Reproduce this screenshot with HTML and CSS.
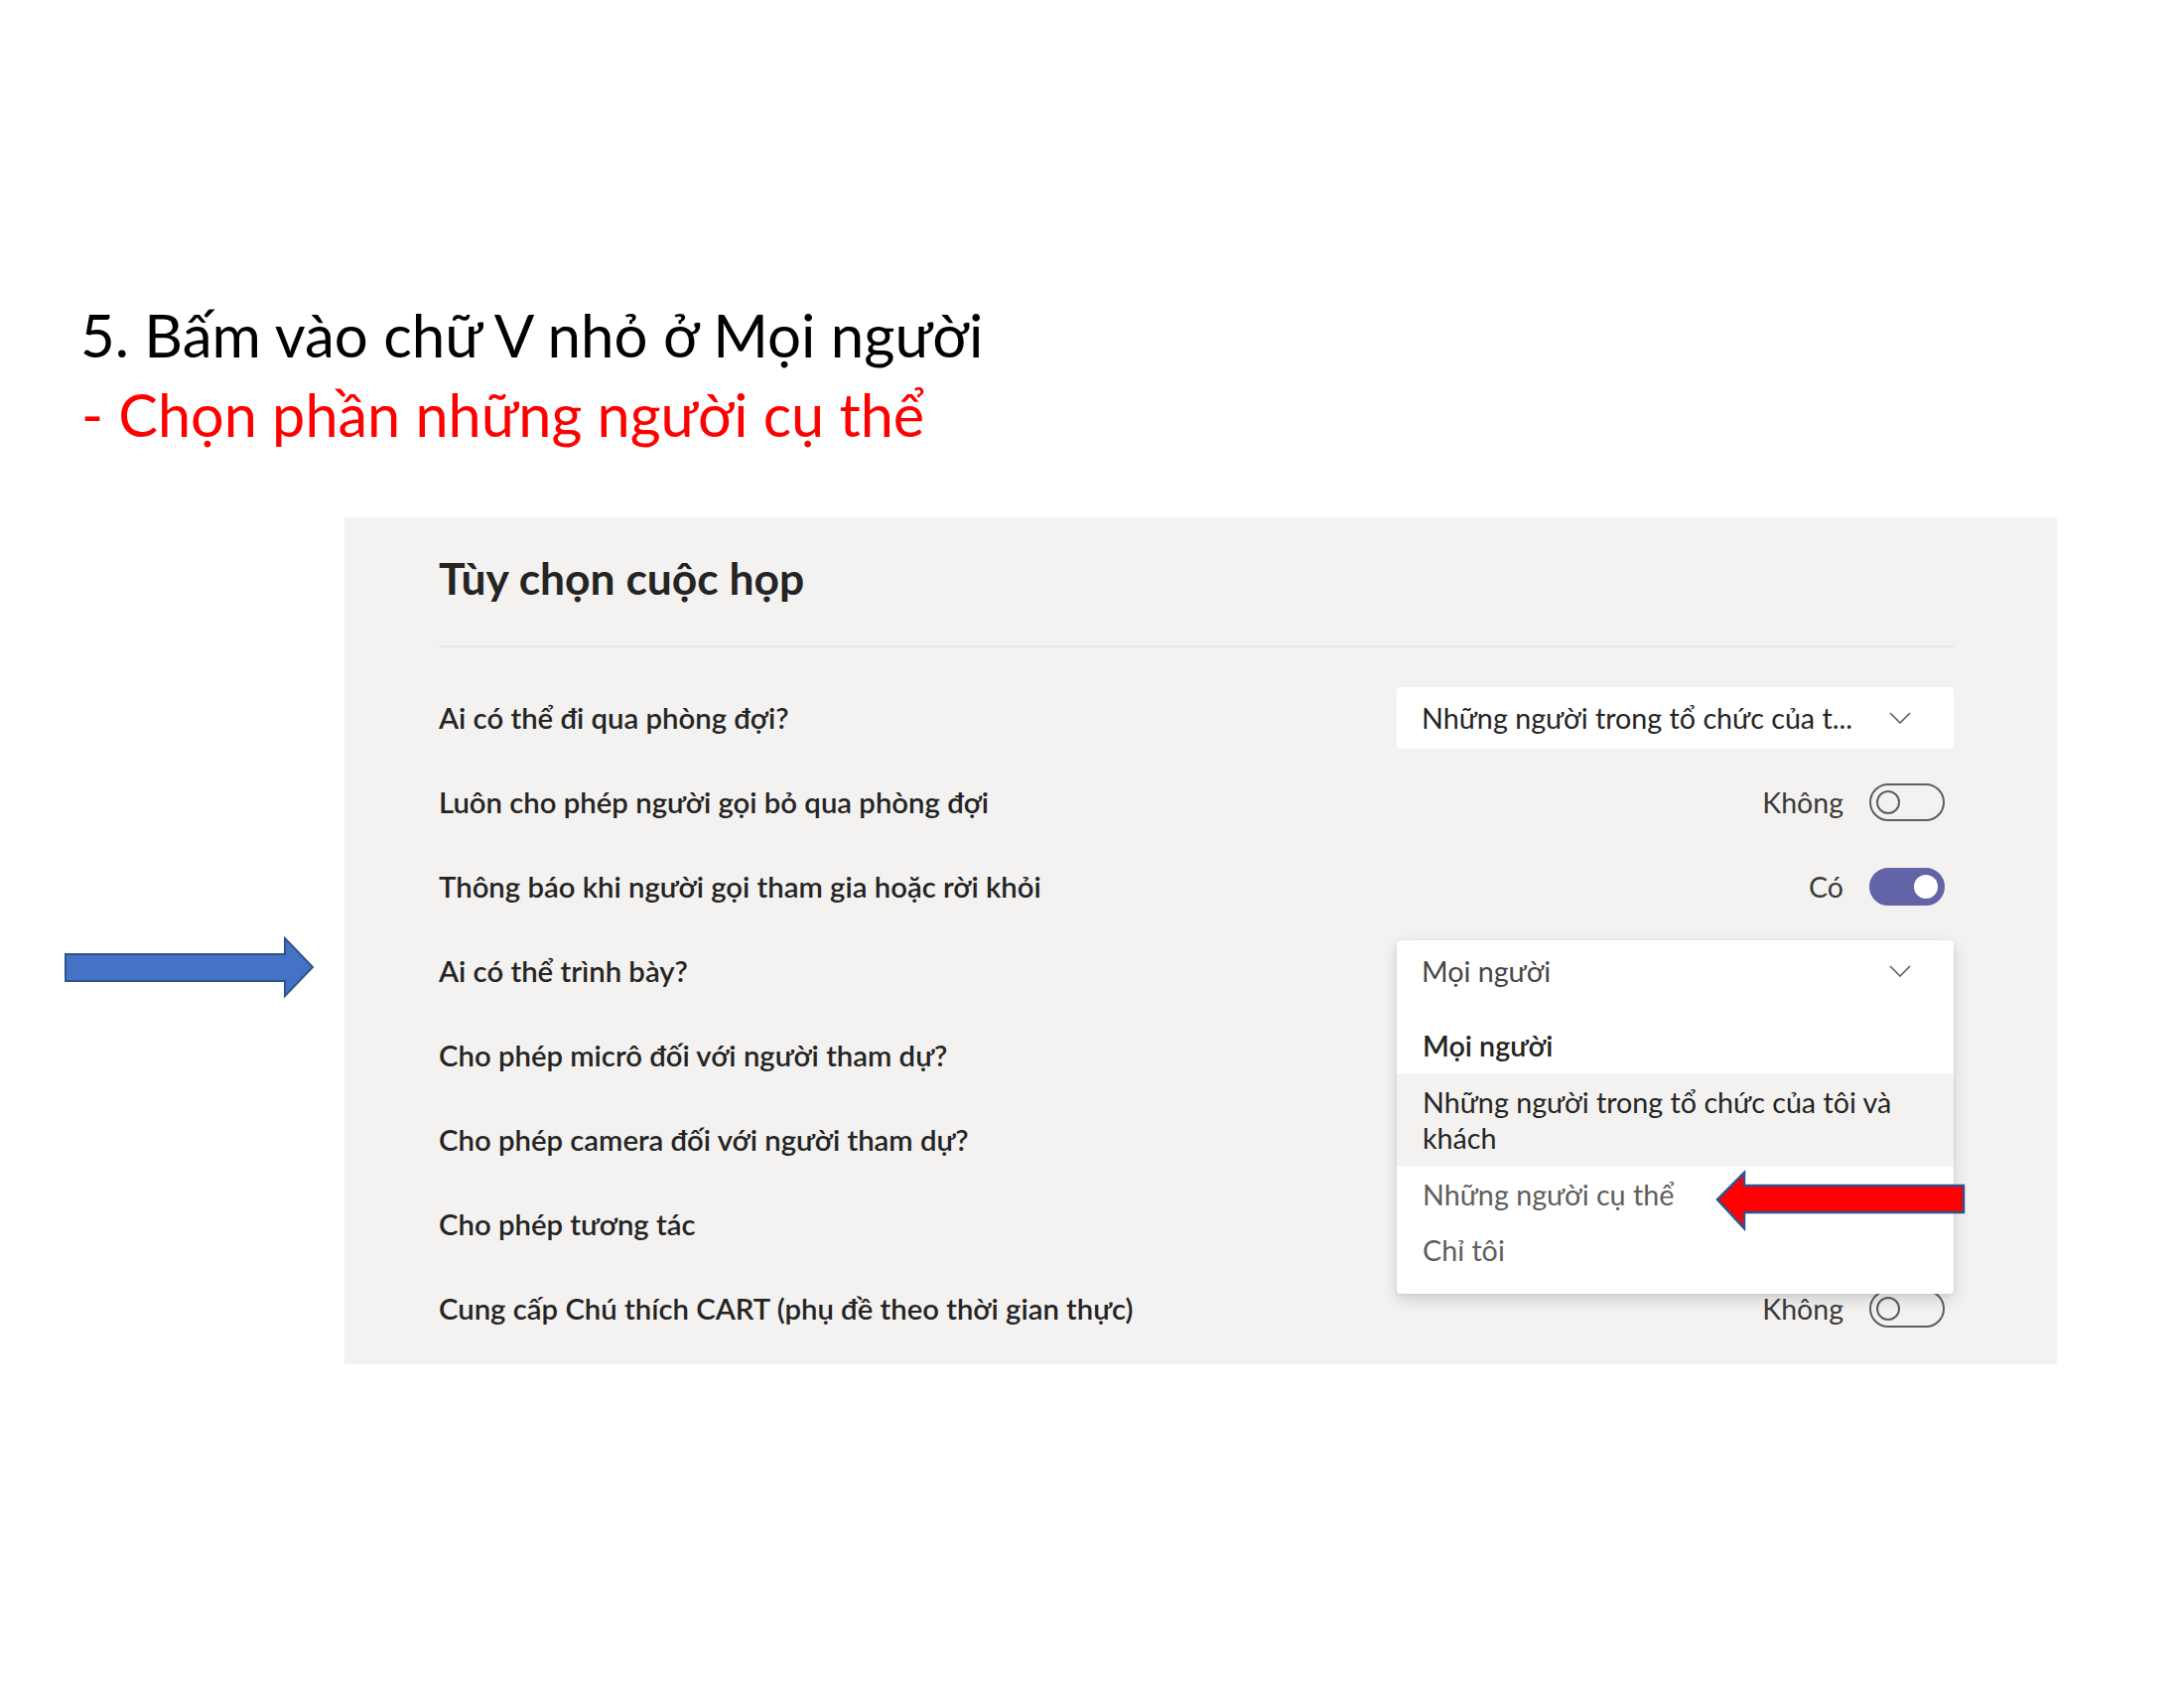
FILE: index.html
```html
<!DOCTYPE html>
<html lang="vi">
  <head>
    <meta charset="UTF-8" />
    <meta name="viewport" content="width=device-width, initial-scale=1.0" />
    <title>Tùy chọn cuộc họp</title>
    <link rel="stylesheet" href="styles.css">
  </head>
  <body>
    <div class="slide">
      <div class="caption">
        <p class="step">5. Bấm vào chữ V nhỏ ở Mọi người</p>
        <p class="step hint">- Chọn phần những người cụ thể</p>
      </div>

      <section class="options">
        <h1>Tùy chọn cuộc họp</h1>
        <div class="list">
          <div class="row">
            <span class="label">Ai có thể đi qua phòng đợi?</span>
            <div class="select">
              <span>Những người trong tổ chức của t...</span>
              <svg class="chevron" viewBox="0 0 22 12"><path d="M1 1 L11 11 L21 1" /></svg>
            </div>
          </div>
          <div class="row">
            <span class="label">Luôn cho phép người gọi bỏ qua phòng đợi</span>
            <div class="switch">
              <span>Không</span>
              <span class="toggle"></span>
            </div>
          </div>
          <div class="row">
            <span class="label">Thông báo khi người gọi tham gia hoặc rời khỏi</span>
            <div class="switch">
              <span>Có</span>
              <span class="toggle on"></span>
            </div>
          </div>
          <div class="row">
            <span class="label">Ai có thể trình bày?</span>
            <div class="select open">
              <div class="menu">
                <div class="menu-value">
                  <span>Mọi người</span>
                  <svg class="chevron" viewBox="0 0 22 12"><path d="M1 1 L11 11 L21 1" /></svg>
                </div>
                <ul class="menu-list">
                  <li class="current">Mọi người</li>
                  <li class="hovered">Những người trong tổ chức của tôi và khách</li>
                  <li class="muted">Những người cụ thể</li>
                  <li class="muted">Chỉ tôi</li>
                </ul>
              </div>
            </div>
          </div>
          <div class="row">
            <span class="label">Cho phép micrô đối với người tham dự?</span>
          </div>
          <div class="row">
            <span class="label">Cho phép camera đối với người tham dự?</span>
          </div>
          <div class="row">
            <span class="label">Cho phép tương tác</span>
          </div>
          <div class="row">
            <span class="label">Cung cấp Chú thích CART (phụ đề theo thời gian thực)</span>
            <div class="switch">
              <span>Không</span>
              <span class="toggle"></span>
            </div>
          </div>
        </div>
      </section>

      <!-- annotation arrows drawn on top of the slide -->
      <svg class="marks" viewBox="0 0 2200 1700">
        <polygon class="arrow-blue" points="66,961 287,961 287,945 315,974 287,1003 287,988 66,988" />
        <polygon class="arrow-red" points="1978,1194 1757,1194 1757,1181 1730,1208 1757,1237 1757,1221 1978,1221" />
      </svg>
    </div>
  </body>
</html>
```

FILE: styles.css
```css
body {
  margin: 0;
  background-color: #ffffff;
  font-family: Lato, "Open Sans", sans-serif;
}
.slide {
  position: relative;
  width: 2200px;
  height: 1700px;
}
.caption {
  padding: 297px 0 0 81px;
}
.step {
  margin: 0;
  font-size: 60px;
  line-height: 80px;
  color: #000000;
}
.hint {
  color: #ff0000;
  margin-left: 1px;
  font-size: 59.4px;
}
.options {
  margin: 64px 0 0 347px;
  width: 1725px;
  height: 853px;
  box-sizing: border-box;
  padding: 31px 104px 0 95px;
  background-color: #f3f2f1;
}
h1 {
  margin: 0;
  padding-bottom: 38px;
  border-bottom: 2px solid #e9e7e5;
  font-size: 44.4px;
  line-height: 60px;
  font-weight: 700;
  color: #252423;
}
.list {
  margin-top: 28px;
}
.row {
  display: flex;
  align-items: center;
  justify-content: space-between;
  height: 85px;
}
.label {
  font-size: 29.3px;
  font-weight: 600;
  color: #252423;
}
.select {
  position: relative;
  width: 561px;
  height: 62px;
  box-sizing: border-box;
  padding: 0 43px 0 25px;
  display: flex;
  align-items: center;
  justify-content: space-between;
  background-color: #ffffff;
  border-radius: 4px;
  font-size: 28.7px;
  color: #252423;
}
.chevron {
  width: 22px;
  height: 12px;
}
.chevron path {
  fill: none;
  stroke: #605e5c;
  stroke-width: 1.6;
}
.select.open {
  padding: 0;
  background-color: transparent;
}
.menu {
  position: absolute;
  top: 0;
  left: 0;
  width: 100%;
  z-index: 2;
  background-color: #ffffff;
  border-radius: 4px;
  box-shadow: 0 6px 16px rgba(0, 0, 0, 0.14), 0 1px 4px rgba(0, 0, 0, 0.08);
}
.menu-value {
  height: 62px;
  box-sizing: border-box;
  padding: 0 43px 0 25px;
  display: flex;
  align-items: center;
  justify-content: space-between;
  color: #484644;
}
.menu-list {
  list-style: none;
  margin: 0;
  padding: 16px 0;
}
.menu-list li {
  padding: 10px 60px 10px 26px;
  line-height: 36px;
  color: #252423;
}
.menu-list .current {
  font-weight: 600;
}
.menu-list .hovered {
  padding-top: 11px;
  padding-bottom: 11px;
  background-color: #f3f2f1;
}
.menu-list .muted {
  color: #605e5c;
}
.switch {
  display: flex;
  align-items: center;
  gap: 26px;
  margin-right: 9px;
  font-size: 28.5px;
  color: #3b3a39;
}
.toggle {
  position: relative;
  width: 76px;
  height: 38px;
  box-sizing: border-box;
  border: 2px solid #605e5c;
  border-radius: 19px;
}
.toggle::after {
  content: "";
  position: absolute;
  top: 5px;
  left: 5px;
  width: 24px;
  height: 24px;
  box-sizing: border-box;
  border: 2px solid #605e5c;
  border-radius: 50%;
}
.toggle.on {
  border-color: #6264a7;
  background-color: #6264a7;
}
.toggle.on::after {
  left: auto;
  right: 5px;
  border: none;
  background-color: #ffffff;
}
.marks {
  position: absolute;
  top: 0;
  left: 0;
  z-index: 3;
  width: 2200px;
  height: 1700px;
  pointer-events: none;
}
.arrow-blue {
  fill: #4472c4;
  stroke: #2f528f;
  stroke-width: 2;
}
.arrow-red {
  fill: #ff0000;
  stroke: #2f528f;
  stroke-width: 2.5;
}
```
